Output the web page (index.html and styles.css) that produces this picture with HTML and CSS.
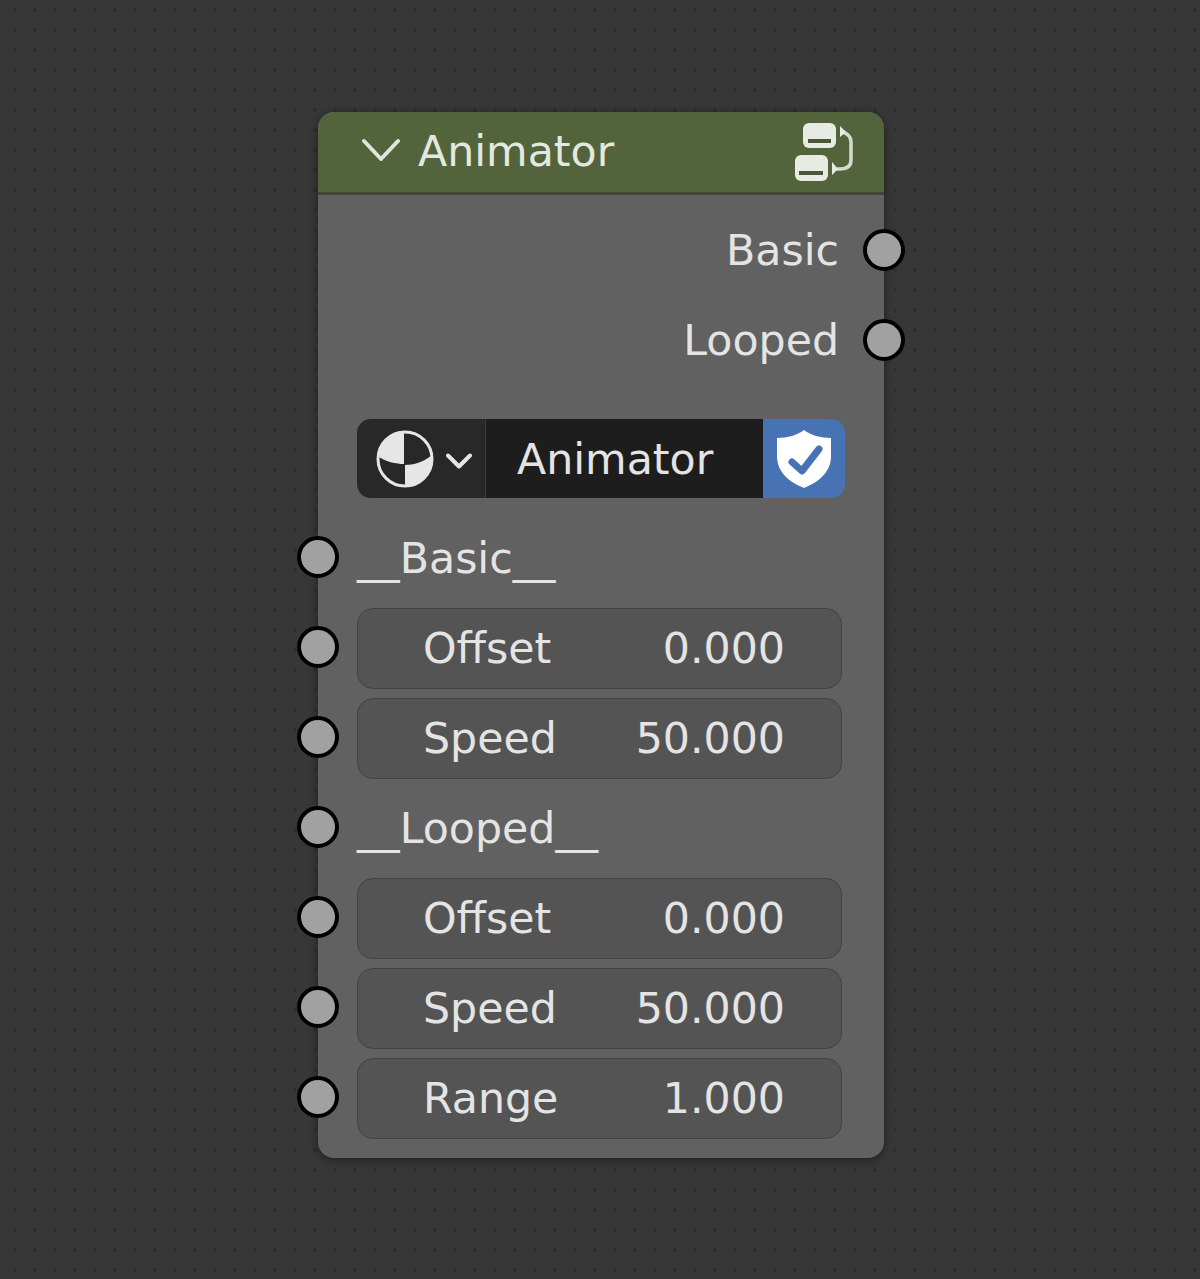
FILE: index.html
```html
<!DOCTYPE html>
<html lang="en">
<head>
<meta charset="utf-8">
<title>Animator</title>
<link rel="stylesheet" href="styles.css">
</head>
<body>
<main class="canvas">
  <section class="node">
    <header class="node-head">
      <svg class="chev-head" viewBox="0 0 38 24"><path d="M2 3 L19 21 L36 3"/></svg>
      <span class="node-title">Animator</span>
      <svg class="group-icon" viewBox="0 0 58 60">
        <rect x="8" y="1" width="33" height="25" rx="6" class="ic-fill"/>
        <rect x="13" y="17" width="23" height="4" class="ic-dark"/>
        <rect x="0" y="33" width="33" height="26" rx="6" class="ic-fill"/>
        <rect x="4" y="49" width="24" height="4" class="ic-dark"/>
        <path d="M46 9 C52 11 56 14 56 20 V38 C56 44 52 47 45 47 H41" class="ic-line"/>
        <path d="M45 4 L51 10 L45 15Z M37 40 L43 47 L37 53Z" class="ic-fill"/>
      </svg>
    </header>
    <div class="node-body">
      <div class="row row-out"><span class="label label-out">Basic</span><i class="socket socket-right"></i></div>
      <div class="row row-out"><span class="label label-out">Looped</span><i class="socket socket-right"></i></div>
      <div class="picker">
        <div class="picker-type">
          <svg class="mat-icon" viewBox="0 0 58 58">
            <circle cx="29" cy="29" r="27" class="mat-ring"/>
            <path d="M28 2 A26.500 26.500 0 0 0 3 27 C11 32 20 34 28 34Z" class="mat-light"/>
            <path d="M29 35 C38 35 47 32 55 26 A26.500 26.500 0 0 1 29 56Z" class="mat-light"/>
          </svg>
          <svg class="chev-small" viewBox="0 0 26 16"><path d="M2 2.500 L13 13.500 L24 2.500"/></svg>
        </div>
        <div class="picker-name">Animator</div>
        <div class="picker-shield">
          <svg class="shield" viewBox="0 0 54 58">
            <path d="M27 0 C33 5 44 8 54 8 V26 C54 42 42 52 27 58 C12 52 0 42 0 26 V8 C10 8 21 5 27 0Z" class="shield-body"/>
            <path d="M15 32 L25 41 L42 19" class="shield-check"/>
          </svg>
        </div>
      </div>
      <div class="row"><i class="socket socket-left"></i><span class="label label-in">__Basic__</span></div>
      <div class="row"><i class="socket socket-left"></i><div class="field"><span>Offset</span><span>0.000</span></div></div>
      <div class="row"><i class="socket socket-left"></i><div class="field"><span>Speed</span><span>50.000</span></div></div>
      <div class="row"><i class="socket socket-left"></i><span class="label label-in">__Looped__</span></div>
      <div class="row"><i class="socket socket-left"></i><div class="field"><span>Offset</span><span>0.000</span></div></div>
      <div class="row"><i class="socket socket-left"></i><div class="field"><span>Speed</span><span>50.000</span></div></div>
      <div class="row"><i class="socket socket-left"></i><div class="field"><span>Range</span><span>1.000</span></div></div>
    </div>
  </section>
</main>
</body>
</html>
```
FILE: styles.css
```css
* { box-sizing: border-box; }
html, body { margin: 0; height: 100%; }
body {
  font-family: "DejaVu Sans", sans-serif;
  font-size: 42.7px;
  color: #e4e4e4;
  background-color: #373737;
  background-image: radial-gradient(circle at center, #2d2d2d 0, #2d2d2d 1.4px, transparent 2.2px);
  background-size: 20px 20px;
  background-position: 5px 0;
}
.canvas { padding: 112px 0 0 318px; }
.node {
  width: 566px;
  background: #616161;
  border-radius: 16px;
  box-shadow: 0 2px 8px rgba(0,0,0,.45);
}
.node-head {
  height: 83px;
  background: #53643c;
  border-bottom: 3px solid #3d4732;
  border-radius: 16px 16px 0 0;
  display: flex;
  align-items: center;
  padding: 0 31px 0 44px;
}
.chev-head { width: 38px; height: 24px; margin: 0 0 4px 0; fill: none; stroke: #dfe5da; stroke-width: 4; stroke-linecap: round; stroke-linejoin: round; }
.node-title { margin: 0 0 2px 18px; color: #e3e9df; line-height: 1; flex: 1; }
.group-icon { width: 58px; height: 60px; }
.ic-fill { fill: #e8ebe4; }
.ic-dark { fill: #4a5738; }
.ic-line { fill: none; stroke: #d4dbcc; stroke-width: 3.5; }
.node-body { padding: 10px 42px 16px 39px; }
.row {
  position: relative;
  height: 90px;
  display: flex;
  align-items: center;
}
.row-out { justify-content: flex-end; padding-right: 3px; }
.label { line-height: 1; white-space: pre; }
.label-in { margin-top: 2px; }
.socket {
  position: absolute;
  top: 24px;
  width: 42px;
  height: 42px;
  border-radius: 50%;
  background: #a1a1a1;
  border: 4px solid #000;
}
.socket-left { left: -60px; }
.socket-right { right: -63px; }
.picker {
  margin: 34px -3px 14px 0;
  height: 79px;
  display: flex;
  border-radius: 14px;
  overflow: hidden;
}
.picker-type {
  width: 129px;
  background: #282828;
  border-right: 1px solid #3a3a3a;
  display: flex;
  align-items: center;
  padding-left: 19px;
}
.mat-icon { width: 58px; height: 58px; flex: none; }
.mat-ring { fill: #282828; stroke: #e6e6e6; stroke-width: 3; }
.mat-light { fill: #e6e6e6; }
.chev-small { width: 26px; height: 16px; margin: 4px 0 0 12px; fill: none; stroke: #e6e6e6; stroke-width: 4; stroke-linecap: round; stroke-linejoin: round; }
.picker-name {
  flex: 1;
  background: #1d1d1d;
  display: flex;
  align-items: center;
  padding-left: 31px;
}
.picker-shield {
  width: 82px;
  background: #4772b3;
  display: flex;
  align-items: center;
  justify-content: center;
}
.shield { width: 54px; height: 58px; }
.shield-body { fill: #fff; }
.shield-check { fill: none; stroke: #4772b3; stroke-width: 7; stroke-linecap: round; stroke-linejoin: round; }
.field {
  width: 100%;
  height: 81px;
  margin-top: 3px;
  background: #545454;
  border: 1px solid #434343;
  border-radius: 16px;
  display: flex;
  justify-content: space-between;
  align-items: center;
  padding: 0 56px 0 65px;
  line-height: 1;
}
```
